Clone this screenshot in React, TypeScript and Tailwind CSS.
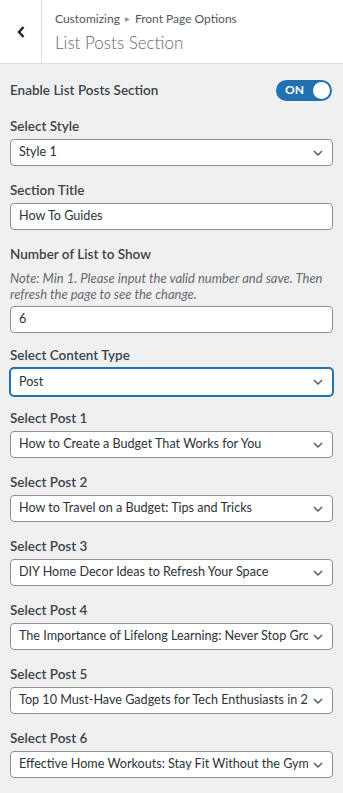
import { ReactNode } from "react";

const posts = [
  "How to Create a Budget That Works for You",
  "How to Travel on a Budget: Tips and Tricks",
  "DIY Home Decor Ideas to Refresh Your Space",
  "The Importance of Lifelong Learning: Never Stop Growing",
  "Top 10 Must-Have Gadgets for Tech Enthusiasts in 2024",
  "Effective Home Workouts: Stay Fit Without the Gym",
];

function Chevron() {
  return (
    <svg width="10" height="6" viewBox="0 0 10 6" className="shrink-0">
      <path d="M1 1 L5 5 L9 1" fill="none" stroke="#50575e" strokeWidth="1.4" />
    </svg>
  );
}

function Label({ children }: { children: ReactNode }) {
  return (
    <div className="text-[13.5px] leading-[20px] font-semibold text-[#3c434a]">
      {children}
    </div>
  );
}

function Select({ value, focused }: { value: string; focused?: boolean }) {
  return (
    <div
      className={
        "mt-[3px] flex items-center rounded-[4px] border bg-white pl-[8px] pr-[8px] " +
        (focused
          ? "h-[28px] border-[#2271b1] shadow-[0_0_0_1px_#2271b1]"
          : "h-[27px] border-[#8c8f94]")
      }
    >
      <div className="min-w-0 flex-1 overflow-hidden whitespace-nowrap text-[12.6px] text-[#2c3338]">
        {value}
      </div>
      <div className="pl-[5px] pr-[1px]">
        <Chevron />
      </div>
    </div>
  );
}

function TextInput({ value, className = "mt-[3px]" }: { value: string; className?: string }) {
  return (
    <div
      className={
        "flex h-[27px] items-center rounded-[4px] border border-[#8c8f94] bg-white px-[8px] text-[12.6px] text-[#2c3338] " +
        className
      }
    >
      {value}
    </div>
  );
}

function Field({ label, children, mb = "mb-[14px]" }: { label: string; children: ReactNode; mb?: string }) {
  return (
    <div className={mb}>
      <Label>{label}</Label>
      {children}
    </div>
  );
}

export default function App() {
  return (
    <div
      className="min-h-[793px] w-[343px] bg-[#f0f0f1]"
      style={{ fontFamily: 'Lato, "Noto Sans", sans-serif' }}
    >
      <div className="flex h-[64px] border-b border-[#dcdcde] bg-white">
        <div className="flex w-[42px] items-center justify-center border-r border-[#dcdcde]">
          <svg width="8" height="12" viewBox="0 0 8 12">
            <path d="M6.5 1 L2 6 L6.5 11" fill="none" stroke="#1d2327" strokeWidth="2.4" />
          </svg>
        </div>
        <div className="pl-[13px] pt-[10px]">
          <div className="flex items-center text-[12px] leading-[17px] text-[#50575e]">
            Customizing
            <span className="mx-[5px] text-[6px] text-[#8c8f94]">▶</span>
            Front Page Options
          </div>
          <div className="mt-[4px] text-[17px] font-light leading-[24px] text-[#646970]">
            List Posts Section
          </div>
        </div>
      </div>

      <div className="px-[10px] pt-[16px]">
        <div className="mb-[16px] flex h-[20px] items-center justify-between">
          <Label>Enable List Posts Section</Label>
          <div className="mr-[1px] flex h-[21px] w-[56px] items-center justify-between rounded-full bg-[#2271b1] pl-[9px] pr-[2px]">
            <span className="text-[12px] font-bold leading-none text-white">ON</span>
            <span className="h-[17px] w-[17px] rounded-full bg-white" />
          </div>
        </div>

        <Field label="Select Style">
          <Select value="Style 1" />
        </Field>

        <Field label="Section Title">
          <TextInput value="How To Guides" />
        </Field>

        <Field label="Number of List to Show" mb="mb-[12px]">
          <div className="mt-[6px] text-[13px] italic leading-[16px] text-[#646970]">
            Note: Min 1. Please input the valid number and save. Then refresh the page to see the change.
          </div>
          <TextInput value="6" className="mt-[4px]" />
        </Field>

        <Field label="Select Content Type" mb="mb-[12px]">
          <Select value="Post" focused />
        </Field>

        {posts.map((p, i) => (
          <Field key={i} label={`Select Post ${i + 1}`}>
            <Select value={p} />
          </Field>
        ))}
      </div>
    </div>
  );
}
